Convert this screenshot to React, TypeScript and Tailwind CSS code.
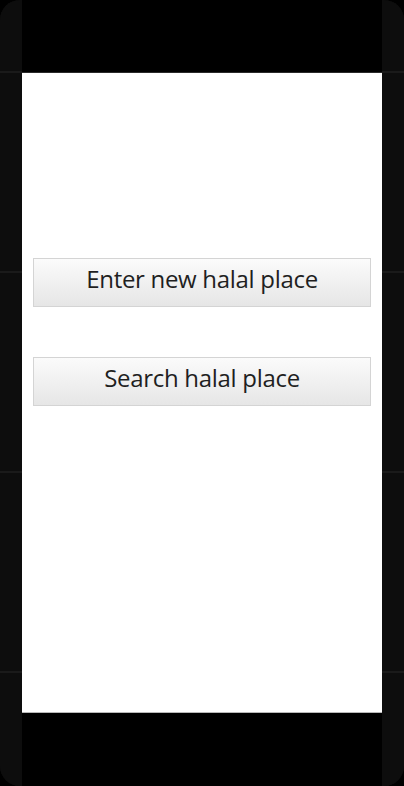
import React from "react";

function SideStrip() {
  // faint seams every 200px on the phone's side bezel
  return (
    <div className="w-[22px] flex flex-col bg-[#0d0d0d]">
      <div className="h-[71px]" />
      <div className="h-[2px] bg-[#1a1a1a]" />
      <div className="h-[198px]" />
      <div className="h-[2px] bg-[#1a1a1a]" />
      <div className="h-[198px]" />
      <div className="h-[2px] bg-[#1a1a1a]" />
      <div className="h-[198px]" />
      <div className="h-[2px] bg-[#1a1a1a]" />
      <div className="flex-1" />
    </div>
  );
}

function MenuButton({ label }: { label: string }) {
  return (
    <button className="h-[49px] w-full pb-[7px] border border-[#d4d4d4] bg-gradient-to-b from-[#fbfbfb] to-[#e6e6e6] text-[24px] text-[#1f1f1f] leading-none font-['Open_Sans',sans-serif] tracking-[-0.3px]">
      {label}
    </button>
  );
}

export default function App() {
  return (
    <div className="w-[404px] h-[786px] bg-black">
      <div className="w-[404px] h-[786px] rounded-[20px] overflow-hidden flex bg-[#0d0d0d]">
        <SideStrip />
        <div className="w-[360px] flex flex-col bg-black">
          <div className="h-[73px] border-b border-[#2a2a2a]" />
          <div className="h-[640px] bg-white flex flex-col px-[11px] pt-[185px] gap-[50px] border-b border-[#b8b8b8]">
            <MenuButton label="Enter new halal place" />
            <MenuButton label="Search halal place" />
          </div>
          <div className="flex-1" />
        </div>
        <SideStrip />
      </div>
    </div>
  );
}
